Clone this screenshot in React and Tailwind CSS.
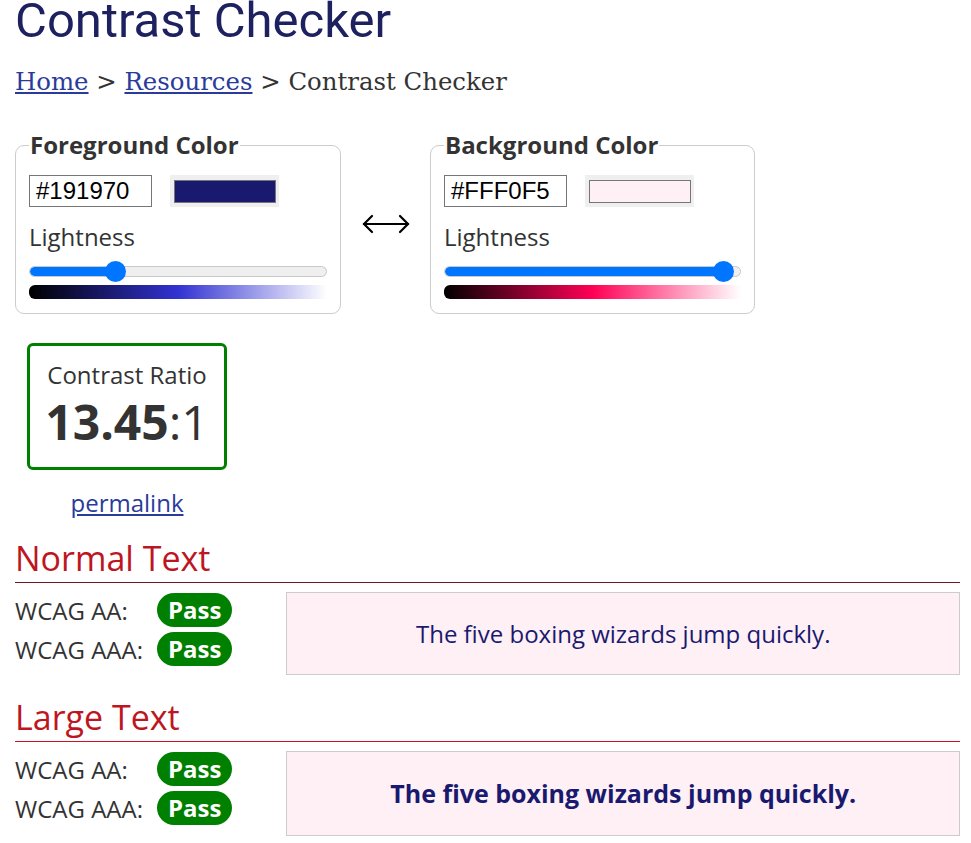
import React from 'react';

const SANS = { fontFamily: '"Open Sans", "Noto Sans", sans-serif' };

function Slider({ pct }) {
  return (
    <div className="relative h-[20px] mt-[9px] flex items-center">
      <div className="w-full h-[11px] rounded-full bg-[#efefef] border border-[#c8c8c8] overflow-hidden">
        <div className="h-full bg-[#0075ff] rounded-full" style={{ width: `${pct}%` }} />
      </div>
      <div
        className="absolute top-0 w-[21px] h-[21px] rounded-full bg-[#0075ff] -ml-[10px]"
        style={{ left: `${pct}%` }}
      />
    </div>
  );
}

function ColorPanel({ title, hex, swatch, pct, gradient, width }) {
  return (
    <fieldset className={`${width} border border-[#cccccc] rounded-[9px] px-[13px] pb-[14px]`}>
      <legend className="text-[24px] leading-[30px] font-bold text-[#333333] px-[1px]">{title}</legend>
      <div className="flex items-center gap-[18px] mt-[15px]">
        <div
          className="w-[123px] h-[32px] border border-[#767676] pl-[6px] flex items-center text-[24px] text-black"
          style={{ fontFamily: '"Liberation Sans", Arial, sans-serif' }}
        >
          {hex}
        </div>
        <div className="w-[109px] h-[32px] bg-[#efefef] flex items-center justify-center">
          <div className={`w-[102px] h-[23px] border border-[#767676] ${swatch}`} />
        </div>
      </div>
      <div className="text-[24px] leading-[30px] mt-[15px] text-[#333333]">Lightness</div>
      <Slider pct={pct} />
      <div className={`h-[14px] mt-[4px] rounded-l-[6px] ${gradient}`} />
    </fieldset>
  );
}

function Badge() {
  return (
    <span className="inline-flex items-center h-[34px] px-[11px] rounded-full bg-[#008000] text-white font-bold text-[24px] leading-none">
      Pass
    </span>
  );
}

function Section({ title, lineClass, sampleClass, boxHeight }) {
  return (
    <div>
      <h2 className="text-[34px] leading-[40px] text-[#bd1622] pb-[4px]">{title}</h2>
      <div className={`h-[1px] ${lineClass}`} />
      <div className="flex items-start gap-[54px] mt-[9px]">
        <div className="flex flex-col gap-[5px] pt-[1px] text-[24px] leading-[33px] text-[#333333]">
          <div className="flex items-center">
            <span className="w-[142px]">WCAG AA:</span>
            <Badge />
          </div>
          <div className="flex items-center">
            <span className="w-[142px]">WCAG AAA:</span>
            <Badge />
          </div>
        </div>
        <div
          className={`flex-1 ${boxHeight} bg-[#fff0f5] border border-[#cccccc] flex items-center justify-center text-[#191970] ${sampleClass}`}
        >
          The five boxing wizards jump quickly.
        </div>
      </div>
    </div>
  );
}

export default function App() {
  return (
    <div className="bg-white min-h-screen pl-[15px] pr-[11px] pt-[1px]" style={SANS}>
      <h1
        className="text-[49px] leading-[48px] -mt-[4px] text-[#1e2160]"
        style={{ fontFamily: 'Roboto, "Open Sans", sans-serif' }}
      >
        Contrast Checker
      </h1>

      <nav
        className="mt-[22px] text-[24.4px] leading-[30px] text-[#333333]"
        style={{ fontFamily: '"DejaVu Serif", "Liberation Serif", serif' }}
      >
        <a href="#" className="text-[#2a3b9c] underline">Home</a>
        {' > '}
        <a href="#" className="text-[#2a3b9c] underline">Resources</a>
        {' > Contrast Checker'}
      </nav>

      <div className="flex items-start mt-[33px]">
        <ColorPanel
          title="Foreground Color"
          hex="#191970"
          swatch="bg-[#191970]"
          pct={28.8}
          width="w-[326px]"
          gradient="bg-[linear-gradient(to_right,#000000,#3232d2_50%,#ffffff)]"
        />
        <div className="w-[89px] flex justify-center pt-[83px]">
          <svg width="48" height="22" viewBox="0 0 48 22" fill="none" stroke="#000" strokeWidth="2.2" strokeLinecap="round">
            <path d="M2 11 H46" />
            <path d="M10 3 L2 11 L10 19" />
            <path d="M38 3 L46 11 L38 19" />
          </svg>
        </div>
        <ColorPanel
          title="Background Color"
          hex="#FFF0F5"
          swatch="bg-[#fff0f5]"
          pct={94}
          width="w-[325px]"
          gradient="bg-[linear-gradient(to_right,#000000,#ff0055_50%,#ffffff)]"
        />
      </div>

      <div className="ml-[12px] mt-[29px] w-[200px] h-[127px] border-[3px] border-[#008000] rounded-[6px] flex flex-col items-center pt-[12px] text-[#333333]">
        <div className="text-[24px] leading-[33px]">Contrast Ratio</div>
        <div className="text-[48px] leading-[50px] mt-[6px]">
          <span className="font-bold">13.45</span>:1
        </div>
      </div>

      <div className="ml-[12px] w-[200px] text-center mt-[16px] text-[24px] leading-[33px]">
        <a href="#" className="text-[#2a3b9c] underline">permalink</a>
      </div>

      <div className="mt-[19px]">
        <Section title="Normal Text" lineClass="bg-[#6e1a1d]" sampleClass="text-[24px]" boxHeight="h-[83px]" />
      </div>
      <div className="mt-[22px]">
        <Section title="Large Text" lineClass="bg-[#d0102a]" sampleClass="text-[25px] font-bold" boxHeight="h-[85px]" />
      </div>
    </div>
  );
}
